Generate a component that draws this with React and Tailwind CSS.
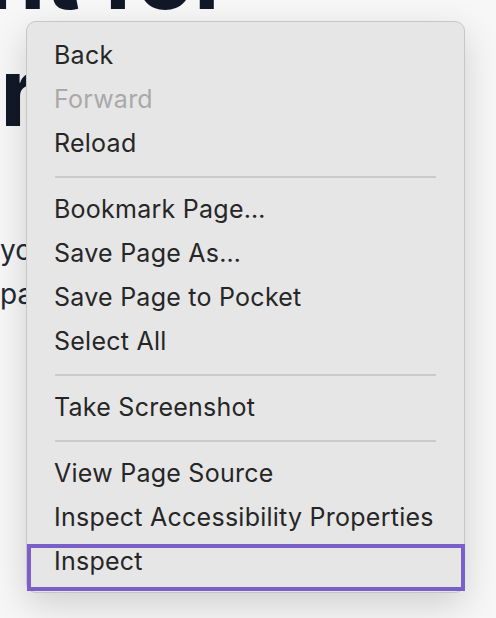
import React from 'react';

const items = [
  { label: 'Back' },
  { label: 'Forward', disabled: true },
  { label: 'Reload' },
  { sep: true },
  { label: 'Bookmark Page…' },
  { label: 'Save Page As…' },
  { label: 'Save Page to Pocket' },
  { label: 'Select All' },
  { sep: true },
  { label: 'Take Screenshot' },
  { sep: true },
  { label: 'View Page Source' },
  { label: 'Inspect Accessibility Properties' },
  { label: 'Inspect' },
];

function ContextMenu() {
  return (
    <div className="absolute left-[26px] top-[21px] w-[439px] rounded-[10px] border border-[#c6c6c6] bg-[#e6e6e6] pt-3 pb-2 shadow-[0_12px_36px_rgba(0,0,0,0.16)]">
      {items.map((item, i) =>
        item.sep ? (
          <div key={i} className="flex h-[22px] items-center px-[28px]">
            <div className="h-[2px] w-full bg-[#cacaca]" />
          </div>
        ) : (
          <div
            key={i}
            className={`flex h-[44px] items-center px-[27px] text-[25px] tracking-[0.25px] ${
              item.disabled ? 'text-[#a9a9a9]' : 'text-[#262626]'
            }`}
          >
            {item.label}
          </div>
        )
      )}
    </div>
  );
}

export default function App() {
  return (
    <div
      className="relative h-[618px] w-[496px] overflow-hidden bg-[#f7f7f8]"
      style={{ fontFamily: 'Inter, "Noto Sans", sans-serif' }}
    >
      {/* page content behind the menu */}
      <div className="text-[#111827]">
        <h1 className="-mt-[84px] ml-[-14px] text-[96px] font-bold leading-[117px] tracking-[-1px] whitespace-nowrap">
          <div>nt for</div>
          <div className="ml-[14px]">rus</div>
        </h1>
        <div className="mt-[78px] text-[28px] leading-[44px] text-[#1f2937] whitespace-nowrap">
          <p>you need</p>
          <p>pages</p>
        </div>
      </div>

      <ContextMenu />

      {/* selection outline */}
      <div className="absolute left-[27px] top-[544px] h-[47px] w-[438px] border-[4px] border-[#7b5fc9]" />
    </div>
  );
}
